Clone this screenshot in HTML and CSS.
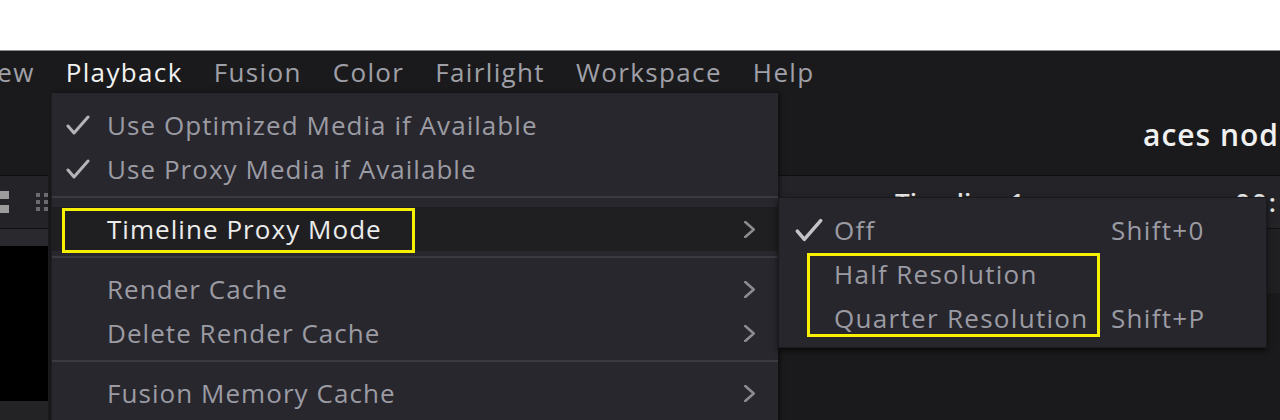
FILE: index.html
```html
<!DOCTYPE html>
<html lang="en">
<head>
    <meta charset="UTF-8">
    <meta name="viewport" content="width=device-width, initial-scale=1.0">
    <title>Playback menu</title>
    <link rel="stylesheet" href="styles.css">
</head>
<body>
    <div class="page">
        <div class="paper"></div>
        <div class="app">
            <nav class="menubar">
                <span class="mb_item first">View</span>
                <span class="mb_item on">Playback</span>
                <span class="mb_item">Fusion</span>
                <span class="mb_item">Color</span>
                <span class="mb_item">Fairlight</span>
                <span class="mb_item">Workspace</span>
                <span class="mb_item">Help</span>
            </nav>
            <div class="title_row"><span class="project">aces node</span></div>
            <div class="workspace">
                <div class="tools">
                    <div class="tool_head">
                        <span class="sq_icon"><i></i><i></i></span>
                        <span class="dots_icon"><i></i><i></i><i></i><i></i><i></i><i></i></span>
                    </div>
                    <div class="tool_sub"></div>
                    <div class="viewer"></div>
                    <div class="viewer_foot"></div>
                </div>
                <div class="timeline">
                    <div class="tl_head">
                        <span class="tl_name">Timeline 1</span>
                        <span class="tl_tc">00:</span>
                    </div>
                    <div class="tl_sub"></div>
                </div>
            </div>
        </div>

        <!-- Playback dropdown -->
        <ul class="dropdown">
            <li class="row"><span class="ck"><svg viewBox="0 0 24 20"><polyline points="2,11 8,18 22,2"/></svg></span>Use Optimized Media if Available</li>
            <li class="row"><span class="ck"><svg viewBox="0 0 24 20"><polyline points="2,11 8,18 22,2"/></svg></span>Use Proxy Media if Available</li>
            <li class="sep"></li>
            <li class="row hover"><span class="ck"></span>Timeline Proxy Mode<span class="arr"><svg viewBox="0 0 12 16"><polyline points="2,1 10,8 2,15"/></svg></span></li>
            <li class="sep"></li>
            <li class="row"><span class="ck"></span>Render Cache<span class="arr"><svg viewBox="0 0 12 16"><polyline points="2,1 10,8 2,15"/></svg></span></li>
            <li class="row"><span class="ck"></span>Delete Render Cache<span class="arr"><svg viewBox="0 0 12 16"><polyline points="2,1 10,8 2,15"/></svg></span></li>
            <li class="sep"></li>
            <li class="row"><span class="ck"></span>Fusion Memory Cache<span class="arr"><svg viewBox="0 0 12 16"><polyline points="2,1 10,8 2,15"/></svg></span></li>
        </ul>

        <!-- Timeline Proxy Mode submenu -->
        <ul class="submenu">
            <li class="srow"><span class="ck big"><svg viewBox="0 0 24 20"><polyline points="2,11 8,18 22,2"/></svg></span><span class="lbl">Off</span><span class="key">Shift+0</span></li>
            <li class="srow"><span class="ck"></span><span class="lbl">Half Resolution</span><span class="key"></span></li>
            <li class="srow"><span class="ck"></span><span class="lbl">Quarter Resolution</span><span class="key">Shift+P</span></li>
        </ul>

        <!-- yellow markers -->
        <div class="mark mark_mode"></div>
        <div class="mark mark_res"></div>
    </div>
</body>
</html>
```

FILE: styles.css
```css
body { margin:0; background:#fff; font-family:"Open Sans","Noto Sans",sans-serif; }
.page { position:relative; width:1280px; height:420px; overflow:hidden; }
.paper { height:50px; background:#fff; border-bottom:1px solid #8c8c8c; }
.app { height:369px; background:#1a1a1c; display:flex; flex-direction:column; }

/* menu bar */
.menubar { height:42px; display:flex; align-items:center; font-size:26px; letter-spacing:1.35px; color:#a0a0a8; white-space:nowrap; }
.mb_item { padding:0 15.5px; }
.mb_item.first { margin-left:-43px; }
.mb_item.on { color:#f2f2f2; }

.title_row { height:82px; display:flex; align-items:center; padding-left:1143px; white-space:nowrap; }
.project { font-size:30px; font-weight:600; letter-spacing:1px; color:#f0f0f0; }

/* panels under the dropdown */
.workspace { flex:1; display:grid; grid-template-columns:48px 1fr; column-gap:3px; }
.tools, .timeline { display:flex; flex-direction:column; }
.tool_head, .tl_head { height:52px; background:#242428; border-top:1px solid #0e0e10; display:flex; align-items:center; }
.tool_sub { height:17px; background:#2a2a2e; border-top:1px solid #111; }
.viewer { height:155px; background:#000; }
.viewer_foot { flex:1; background:#232326; }
.tl_sub { height:64px; background:#202023; border-top:1px solid #111; }

.sq_icon { display:flex; flex-direction:column; gap:6px; margin-left:-1px; }
.sq_icon i { display:block; width:10px; height:8px; background:#9c9c9c; }
.dots_icon { display:grid; grid-template-columns:repeat(2,4px); gap:3px 4px; margin-left:27px; }
.dots_icon i { display:block; width:4px; height:4px; background:#6c6c70; }

.tl_name { margin-left:844px; font-size:26px; font-weight:600; color:#e8e8e8; }
.tl_tc { margin-left:auto; margin-right:2px; font-size:26px; font-weight:600; letter-spacing:2px; color:#e8e8e8; }

/* dropdown */
.dropdown { position:absolute; left:51px; top:93px; width:727px; height:340px; margin:0; padding:10px 0 0; list-style:none; background:#28272d; border-left:1px solid #1e1e22; box-shadow:2px 0 4px rgba(0,0,0,.5); box-sizing:border-box; }
.row { height:44px; display:flex; align-items:center; font-size:26px; letter-spacing:1.05px; color:#9b9ba4; white-space:nowrap; }
.row.hover { background:#1f1f21; color:#ececec; }
.sep { height:2px; margin:5px 0 9px; background:#3a3a3f; }
.ck { width:55px; flex:none; display:flex; justify-content:flex-start; padding-left:14px; box-sizing:border-box; }
.ck svg { width:24px; height:20px; }
.ck polyline { fill:none; stroke:#b4b4b6; stroke-width:3; stroke-linecap:round; stroke-linejoin:round; }
.arr { margin-left:auto; margin-right:22px; display:flex; }
.arr svg { width:13px; height:17px; }
.arr polyline { fill:none; stroke:#8c8c90; stroke-width:2.4; stroke-linecap:round; stroke-linejoin:round; }

/* submenu */
.submenu { position:absolute; left:778px; top:197px; width:489px; height:151px; margin:0; padding:10px 0 0; list-style:none; background:#27262c; border:1px solid #1a1a1c; box-shadow:0 3px 6px rgba(0,0,0,.6); box-sizing:border-box; }
.srow { height:44px; display:flex; align-items:center; font-size:26px; letter-spacing:1.3px; color:#9b9ba4; white-space:nowrap; }
.srow .lbl { width:277px; }
.ck.big { padding-left:16px; }
.ck.big svg { width:28px; height:24px; }
.ck.big polyline { stroke:#c4c4c6; }

/* yellow markers */
.mark { position:absolute; border:3px solid #f7f000; box-sizing:border-box; }
.mark_mode { left:62px; top:208px; width:353px; height:45px; }
.mark_res { left:807px; top:253px; width:293px; height:84px; }
```
